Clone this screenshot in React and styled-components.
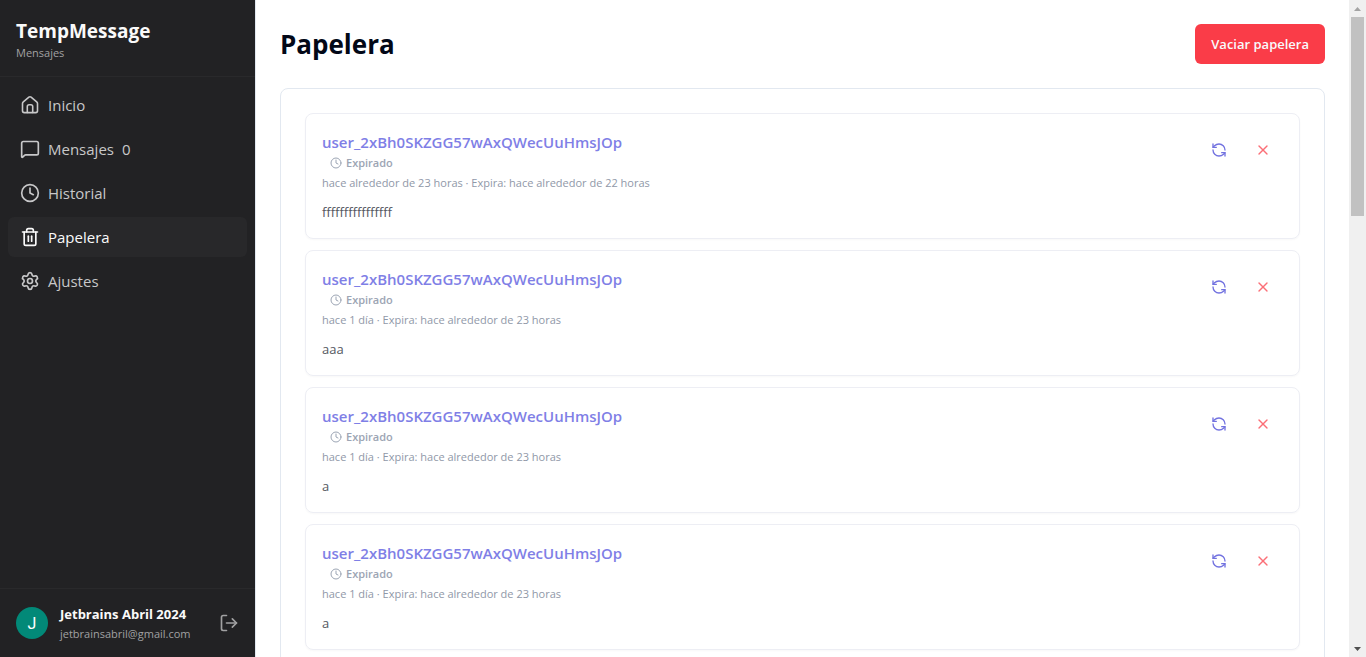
import React from 'react';
import styled, { createGlobalStyle, css } from 'styled-components';
import { MessageSquare, Clock, Trash2, Settings, LogOut, RefreshCcw, X } from 'lucide-react';

const GlobalStyle = createGlobalStyle`
  *, *::before, *::after { box-sizing: border-box; }
  body {
    margin: 0;
    background: #ffffff;
    color: #020817;
    font-family: "Segoe UI", "Open Sans", sans-serif;
  }
  h1, h2, p { margin: 0; }
  button { font-family: inherit; cursor: pointer; }
`;

const Layout = styled.div`
  display: flex;
  height: 100vh;
  overflow: hidden;
`;

const Sidebar = styled.aside`
  display: flex;
  flex-direction: column;
  flex: 0 0 256px;
  background: #222224;
  border-right: 1px solid #e2e8f0;
`;

const Brand = styled.header`
  padding: 16px;
  border-bottom: 1px solid #29292b;
`;

const BrandName = styled.h2`
  color: #fafafa;
  font-size: 19px;
  line-height: 30px;
  font-weight: 700;
`;

const BrandNote = styled.p`
  color: #a1a1a2;
  font-size: 11px;
  line-height: 14px;
`;

const Nav = styled.nav`
  display: flex;
  flex-direction: column;
  flex: 1;
  gap: 4px;
  padding: 8px;
`;

const NavLink = styled.a`
  display: flex;
  align-items: center;
  gap: 8px;
  height: 40px;
  padding: 0 12px;
  border-radius: 6px;
  color: #c8c8c9;
  font-size: 15px;
  line-height: 24px;
  text-decoration: none;
  ${(p) => p.$active && css`
    background: #28282a;
    color: #fafafa;
  `}
`;

const Account = styled.footer`
  display: flex;
  align-items: center;
  gap: 12px;
  padding: 15px 16px;
  border-top: 1px solid #29292b;
`;

const Avatar = styled.span`
  display: grid;
  place-items: center;
  width: 32px;
  height: 32px;
  border-radius: 50%;
  background: #028978;
  color: #ffffff;
  font-family: Roboto, sans-serif;
  font-size: 16px;
`;

const AccountText = styled.div`
  flex: 1;
  min-width: 0;
  white-space: nowrap;
`;

const AccountName = styled.p`
  color: #fafafa;
  font-size: 13px;
  line-height: 21px;
  font-weight: 700;
`;

const AccountMail = styled.p`
  color: #a1a1a2;
  font-size: 11px;
  line-height: 17px;
`;

const IconButton = styled.button`
  display: grid;
  place-items: center;
  width: ${(p) => p.$size}px;
  height: ${(p) => p.$size}px;
  padding: 0;
  border: 0;
  border-radius: 6px;
  background: transparent;
  color: ${(p) => p.$color};
`;

const Main = styled.main`
  flex: 1;
  min-width: 0;
  padding: 24px;
  overflow-y: auto;
  scrollbar-width: none;
`;

const PageHeader = styled.header`
  display: flex;
  align-items: center;
  justify-content: space-between;
  margin-bottom: 24px;
`;

const PageTitle = styled.h1`
  font-size: 26px;
  line-height: 40px;
  font-weight: 700;
`;

const EmptyButton = styled.button`
  height: 40px;
  padding: 0 16px;
  border: 0;
  border-radius: 6px;
  background: #fa3c48;
  color: #f8fafc;
  font-size: 13px;
  line-height: 20px;
  font-weight: 600;
`;

const Panel = styled.section`
  display: flex;
  flex-direction: column;
  gap: 11px;
  padding: 24px;
  border: 1px solid #e2e8f0;
  border-radius: 8px;
`;

const Card = styled.article`
  display: flex;
  align-items: flex-start;
  gap: 4px;
  padding: 16px;
  border: 1px solid #edeef4;
  border-radius: 8px;
  box-shadow: 0 1px 2px rgba(0, 0, 0, 0.03);
`;

const CardBody = styled.div`
  flex: 1;
  min-width: 0;
`;

const Sender = styled.h2`
  color: #7f7fe6;
  font-size: 15px;
  line-height: 24px;
  font-weight: 600;
`;

const Status = styled.p`
  display: flex;
  align-items: center;
  gap: 4px;
  padding-left: 8px;
  color: #9ca5b4;
  font-size: 11px;
  line-height: 17px;
  font-weight: 600;
`;

const Meta = styled.p`
  margin-top: 4px;
  color: #9098a8;
  font-size: 11px;
  line-height: 16px;
`;

const Message = styled.p`
  margin-top: 11px;
  color: #54575f;
  font-size: 13px;
  line-height: 20px;
`;

const ScrollRail = styled.div`
  display: flex;
  flex-direction: column;
  flex: 0 0 17px;
  align-items: center;
  background: #f0f0f0;
`;

const ScrollArrow = styled.span`
  display: grid;
  place-items: center;
  height: 17px;
  color: ${(p) => p.$color};
`;

const ScrollTrack = styled.div`
  flex: 1;
  width: 13px;
`;

const ScrollThumb = styled.div`
  height: 32%;
  background: #c1c1c1;
`;

function HomeIcon({ size }) {
  return (
    <svg
      width={size}
      height={size}
      viewBox="0 0 20 20"
      fill="none"
      stroke="currentColor"
      strokeWidth="1.6"
      strokeLinecap="round"
      strokeLinejoin="round"
      aria-hidden="true"
    >
      <path d="M2.5 8.4c0-.6.3-1.2.8-1.6l5.6-4.6a1.8 1.8 0 0 1 2.2 0l5.6 4.6c.5.4.8 1 .8 1.6v7.4a1.8 1.8 0 0 1-1.8 1.8H4.3a1.8 1.8 0 0 1-1.8-1.8z" />
      <path d="M7.3 17.5v-6a1.8 1.8 0 0 1 1.8-1.8h1.8a1.8 1.8 0 0 1 1.8 1.8v6" />
    </svg>
  );
}

const links = [
  { label: 'Inicio', icon: HomeIcon },
  { label: 'Mensajes', icon: MessageSquare, count: 0 },
  { label: 'Historial', icon: Clock },
  { label: 'Papelera', icon: Trash2, active: true },
  { label: 'Ajustes', icon: Settings },
];

const sender = 'user_2xBh0SKZGG57wAxQWecUuHmsJOp';

const messages = [
  { sent: 'hace alrededor de 23 horas', expires: 'hace alrededor de 22 horas', text: 'ffffffffffffffff' },
  { sent: 'hace 1 día', expires: 'hace alrededor de 23 horas', text: 'aaa' },
  { sent: 'hace 1 día', expires: 'hace alrededor de 23 horas', text: 'a' },
  { sent: 'hace 1 día', expires: 'hace alrededor de 23 horas', text: 'a' },
];

function MessageCard({ message }) {
  return (
    <Card>
      <CardBody>
        <Sender>{sender}</Sender>
        <Status><Clock size={12} />Expirado</Status>
        <Meta>{message.sent} · Expira: {message.expires}</Meta>
        <Message>{message.text}</Message>
      </CardBody>
      <IconButton type="button" $size={40} $color="#7272e0" aria-label="Restaurar">
        <RefreshCcw size={16} />
      </IconButton>
      <IconButton type="button" $size={40} $color="#fb6f77" aria-label="Eliminar">
        <X size={16} />
      </IconButton>
    </Card>
  );
}

export default function App() {
  return (
    <>
      <GlobalStyle />
      <Layout>
        <Sidebar>
          <Brand>
            <BrandName>TempMessage</BrandName>
            <BrandNote>Mensajes</BrandNote>
          </Brand>
          <Nav>
            {links.map(({ label, icon: Icon, count, active }) => (
              <NavLink key={label} href="#" $active={active} aria-current={active ? 'page' : undefined}>
                <Icon size={20} />
                <span>{label}</span>
                {count !== undefined && <span>{count}</span>}
              </NavLink>
            ))}
          </Nav>
          <Account>
            <Avatar>J</Avatar>
            <AccountText>
              <AccountName>Jetbrains Abril 2024</AccountName>
              <AccountMail>jetbrainsabril@gmail.com</AccountMail>
            </AccountText>
            <IconButton type="button" $size={20} $color="#a1a1a2" aria-label="Cerrar sesión">
              <LogOut size={20} />
            </IconButton>
          </Account>
        </Sidebar>
        <Main>
          <PageHeader>
            <PageTitle>Papelera</PageTitle>
            <EmptyButton type="button">Vaciar papelera</EmptyButton>
          </PageHeader>
          <Panel>
            {messages.map((message, index) => (
              <MessageCard key={index} message={message} />
            ))}
          </Panel>
        </Main>
        <ScrollRail aria-hidden="true">
          <ScrollArrow $color="#a3a3a3">
            <svg width="7" height="4" viewBox="0 0 7 4"><path d="M0 4 3.5 0 7 4z" fill="currentColor" /></svg>
          </ScrollArrow>
          <ScrollTrack><ScrollThumb /></ScrollTrack>
          <ScrollArrow $color="#505050">
            <svg width="7" height="4" viewBox="0 0 7 4"><path d="M0 0 3.5 4 7 0z" fill="currentColor" /></svg>
          </ScrollArrow>
        </ScrollRail>
      </Layout>
    </>
  );
}
